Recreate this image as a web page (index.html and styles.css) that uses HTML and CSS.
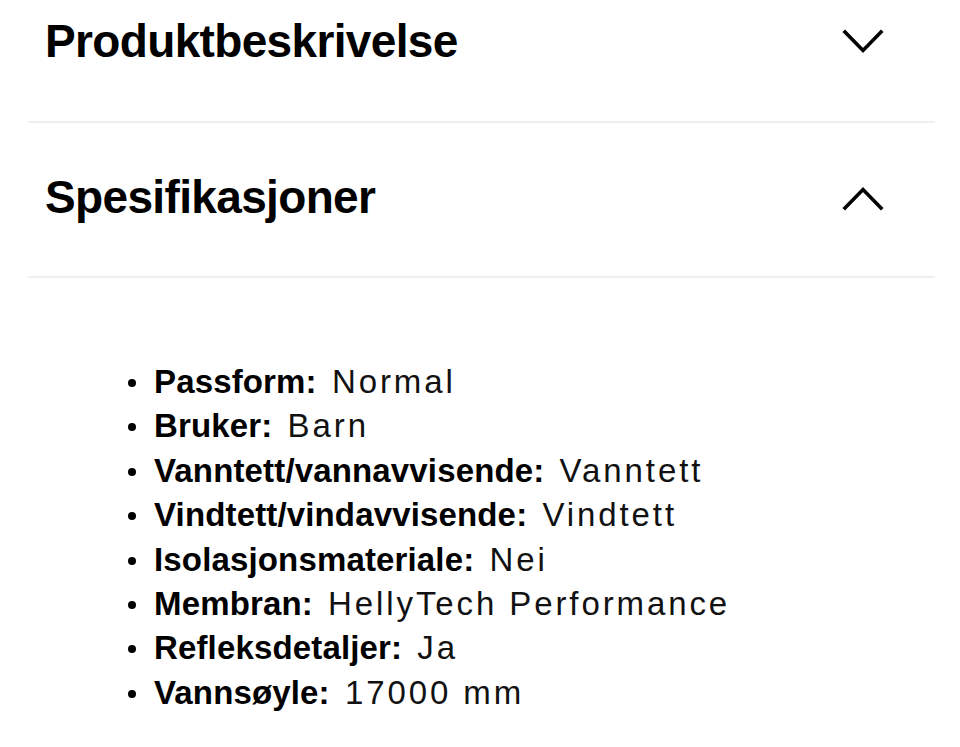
FILE: index.html
```html
<!DOCTYPE html>
<html lang="no">
<head>
<meta charset="utf-8">
<title>Produktinformasjon</title>
<link rel="stylesheet" href="styles.css">
</head>
<body>
<div class="accordion">
  <section class="item">
    <div class="item-head item-head--first">
      <h2 class="item-title">Produktbeskrivelse</h2>
      <svg class="chevron" width="42" height="26" viewBox="0 0 42 26" aria-hidden="true">
        <polyline points="3,3 21,21.5 39,3" fill="none" stroke="#000" stroke-width="3.6" stroke-linecap="square" stroke-linejoin="miter"/>
      </svg>
    </div>
  </section>
  <section class="item">
    <div class="item-head">
      <h2 class="item-title">Spesifikasjoner</h2>
      <svg class="chevron" width="42" height="26" viewBox="0 0 42 26" aria-hidden="true">
        <polyline points="3,23 21,4.5 39,23" fill="none" stroke="#000" stroke-width="3.6" stroke-linecap="square" stroke-linejoin="miter"/>
      </svg>
    </div>
  </section>
  <ul class="specs">
    <li class="spec"><span class="label">Passform:</span> <span class="value">Normal</span></li>
    <li class="spec"><span class="label">Bruker:</span> <span class="value">Barn</span></li>
    <li class="spec"><span class="label">Vanntett/vannavvisende:</span> <span class="value">Vanntett</span></li>
    <li class="spec"><span class="label">Vindtett/vindavvisende:</span> <span class="value">Vindtett</span></li>
    <li class="spec"><span class="label">Isolasjonsmateriale:</span> <span class="value">Nei</span></li>
    <li class="spec"><span class="label">Membran:</span> <span class="value">HellyTech Performance</span></li>
    <li class="spec"><span class="label">Refleksdetaljer:</span> <span class="value">Ja</span></li>
    <li class="spec"><span class="label">Vannsøyle:</span> <span class="value">17000 mm</span></li>
  </ul>
</div>
</body>
</html>
```

FILE: styles.css
```css
html, body {
  margin: 0;
  padding: 0;
  background: #ffffff;
}

body {
  font-family: "Liberation Sans", Arial, Helvetica, sans-serif;
  color: #000;
}

.accordion {
  margin: 0 25px 0 28px;
}

.item {
  border-bottom: 2px solid #efefef;
}

.item-head {
  display: flex;
  align-items: center;
  justify-content: space-between;
  padding: 47px 51px 51px 17px;
}

.item-head--first {
  padding-top: 14px;
  padding-bottom: 52px;
}

.item-title {
  margin: 0;
  font-size: 46px;
  line-height: 55px;
  font-weight: 700;
  letter-spacing: -0.65px;
}

.chevron {
  display: block;
  flex: none;
}

.specs {
  list-style: none;
  margin: 82px 0 0 0;
  padding: 0 0 0 100px;
}

.spec {
  font-size: 33px;
  line-height: 44.4px;
  white-space: nowrap;
}

.spec::before {
  content: "";
  display: inline-block;
  width: 8px;
  height: 8px;
  border-radius: 50%;
  background: #000;
  vertical-align: 6px;
  margin-right: 18px;
}

.label {
  font-weight: 700;
  letter-spacing: 0.15px;
}

.value {
  font-weight: 400;
  letter-spacing: 2.9px;
  margin-left: 6px;
  color: #111;
}
```
